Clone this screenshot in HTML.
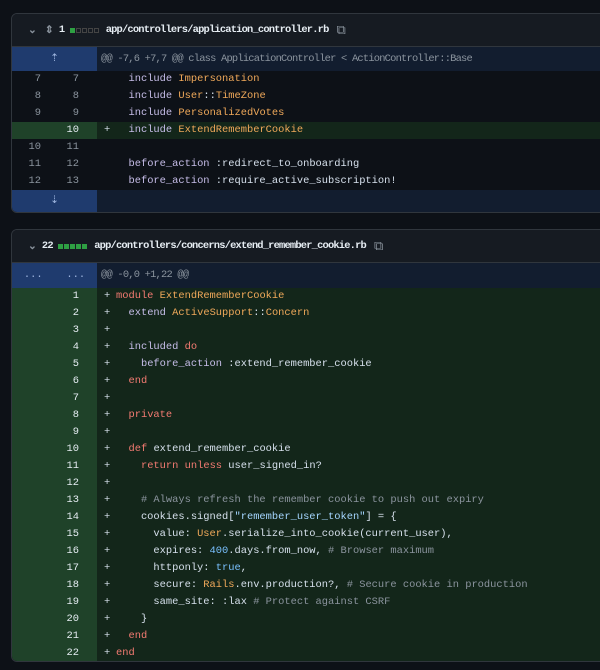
<!DOCTYPE html>
<html><head><meta charset="utf-8"><style>
*{margin:0;padding:0;box-sizing:border-box}
body{width:600px;height:670px;background:#0d1117;overflow:hidden;font-family:"Liberation Mono",monospace;font-size:10.4px;color:#d6e0ec;position:relative}
.box{position:absolute;left:11px;width:600px;border:1px solid #30363d;border-radius:6px;overflow:hidden;background:#0d1117}
.hdr{height:33px;background:#161b22;border-bottom:1px solid #30363d;display:flex;align-items:center;color:#e6edf3;font-size:10.4px;font-weight:bold;letter-spacing:-0.8px;white-space:pre}
.sq{display:inline-block;width:5px;height:5px;margin-right:1px;vertical-align:middle}
.row{display:flex;height:17px;line-height:17px}
.gut{width:85px;flex:none;display:flex}
.n{width:37px;text-align:right;padding-right:8px;color:#8b949e;flex:none}
.n2{width:38px;text-align:right;padding-right:8px;color:#8b949e;flex:none}
.hunk{background:#121d2f;height:24px;line-height:24px;color:#8b949e}
.hunk .g{width:85px;background:#1f3b6e;flex:none;color:#9fb6e0;text-align:center;letter-spacing:0}
.hunk .code{letter-spacing:-0.78px;padding-left:4px}
.add{background:#13261a}
.add .gut{background:#1f4229}
.add .n,.add .n2{color:#e6edf3}
.p{width:19px;padding-left:7px;flex:none}
.code{white-space:pre}
.k{color:#f47b72}.c{color:#f0a95a}.b{color:#79c0ff}.cm{color:#8b949e}.i{color:#c6bde8}.s{color:#a5d6ff}
</style></head><body>
<div class="box" style="top:13px;height:200px">
 <div class="hdr"><span style="margin-left:16px;color:#8b949e">⌄</span><span style="margin-left:9px;color:#8b949e">⇕</span><span style="margin-left:6px">1 </span><span class="sq" style="background:#2ea043"></span><span class="sq" style="border:1px solid #444"></span><span class="sq" style="border:1px solid #444"></span><span class="sq" style="border:1px solid #444"></span><span class="sq" style="border:1px solid #444"></span><span style="margin-left:6px">app/controllers/application_controller.rb</span><span style="margin-left:8px;color:#8b949e;font-weight:normal;font-size:13px">⧉</span></div>
 <div class="row hunk"><span class="g">⇡</span><span class="code">@@ -7,6 +7,7 @@ class ApplicationController &lt; ActionController::Base</span></div>
 <div class="row"><span class="gut"><span class="n">7</span><span class="n2">7</span></span><span class="p"> </span><span class="code">  <span class="i">include</span> <span class="c">Impersonation</span></span></div>
 <div class="row"><span class="gut"><span class="n">8</span><span class="n2">8</span></span><span class="p"> </span><span class="code">  <span class="i">include</span> <span class="c">User</span>::<span class="c">TimeZone</span></span></div>
 <div class="row"><span class="gut"><span class="n">9</span><span class="n2">9</span></span><span class="p"> </span><span class="code">  <span class="i">include</span> <span class="c">PersonalizedVotes</span></span></div>
 <div class="row add"><span class="gut"><span class="n"></span><span class="n2">10</span></span><span class="p">+</span><span class="code">  <span class="i">include</span> <span class="c">ExtendRememberCookie</span></span></div>
 <div class="row"><span class="gut"><span class="n">10</span><span class="n2">11</span></span><span class="p"> </span></div>
 <div class="row"><span class="gut"><span class="n">11</span><span class="n2">12</span></span><span class="p"> </span><span class="code">  <span class="i">before_action</span> :redirect_to_onboarding</span></div>
 <div class="row"><span class="gut"><span class="n">12</span><span class="n2">13</span></span><span class="p"> </span><span class="code">  <span class="i">before_action</span> :require_active_subscription!</span></div>
 <div class="row hunk" style="height:22px;line-height:22px"><span class="g">⇣</span><span></span></div>
</div>
<div class="box" style="top:229px;height:433px">
 <div class="hdr"><span style="margin-left:16px;color:#8b949e">⌄</span><span style="margin-left:6px">22 </span><span class="sq" style="background:#2ea043"></span><span class="sq" style="background:#2ea043"></span><span class="sq" style="background:#2ea043"></span><span class="sq" style="background:#2ea043"></span><span class="sq" style="background:#2ea043"></span><span style="margin-left:6px">app/controllers/concerns/extend_remember_cookie.rb</span><span style="margin-left:8px;color:#8b949e;font-weight:normal;font-size:13px">⧉</span></div>
 <div class="row hunk" style="height:25px;line-height:25px"><span class="g" style="display:flex;justify-content:space-around"><span>...</span><span>...</span></span><span class="code">@@ -0,0 +1,22 @@</span></div>
 <div class="add">
 <div class="row"><span class="gut"><span class="n"></span><span class="n2">1</span></span><span class="p">+</span><span class="code"><span class="k">module</span> <span class="c">ExtendRememberCookie</span></span></div>
 <div class="row"><span class="gut"><span class="n"></span><span class="n2">2</span></span><span class="p">+</span><span class="code">  <span class="i">extend</span> <span class="c">ActiveSupport</span>::<span class="c">Concern</span></span></div>
 <div class="row"><span class="gut"><span class="n"></span><span class="n2">3</span></span><span class="p">+</span></div>
 <div class="row"><span class="gut"><span class="n"></span><span class="n2">4</span></span><span class="p">+</span><span class="code">  <span class="i">included</span> <span class="k">do</span></span></div>
 <div class="row"><span class="gut"><span class="n"></span><span class="n2">5</span></span><span class="p">+</span><span class="code">    <span class="i">before_action</span> :extend_remember_cookie</span></div>
 <div class="row"><span class="gut"><span class="n"></span><span class="n2">6</span></span><span class="p">+</span><span class="code">  <span class="k">end</span></span></div>
 <div class="row"><span class="gut"><span class="n"></span><span class="n2">7</span></span><span class="p">+</span></div>
 <div class="row"><span class="gut"><span class="n"></span><span class="n2">8</span></span><span class="p">+</span><span class="code">  <span class="k">private</span></span></div>
 <div class="row"><span class="gut"><span class="n"></span><span class="n2">9</span></span><span class="p">+</span></div>
 <div class="row"><span class="gut"><span class="n"></span><span class="n2">10</span></span><span class="p">+</span><span class="code">  <span class="k">def</span> extend_remember_cookie</span></div>
 <div class="row"><span class="gut"><span class="n"></span><span class="n2">11</span></span><span class="p">+</span><span class="code">    <span class="k">return</span> <span class="k">unless</span> user_signed_in?</span></div>
 <div class="row"><span class="gut"><span class="n"></span><span class="n2">12</span></span><span class="p">+</span></div>
 <div class="row"><span class="gut"><span class="n"></span><span class="n2">13</span></span><span class="p">+</span><span class="code">    <span class="cm"># Always refresh the remember cookie to push out expiry</span></span></div>
 <div class="row"><span class="gut"><span class="n"></span><span class="n2">14</span></span><span class="p">+</span><span class="code">    cookies.signed[<span class="s">"remember_user_token"</span>] = {</span></div>
 <div class="row"><span class="gut"><span class="n"></span><span class="n2">15</span></span><span class="p">+</span><span class="code">      value: <span class="c">User</span>.serialize_into_cookie(current_user),</span></div>
 <div class="row"><span class="gut"><span class="n"></span><span class="n2">16</span></span><span class="p">+</span><span class="code">      expires: <span class="b">400</span>.days.from_now, <span class="cm"># Browser maximum</span></span></div>
 <div class="row"><span class="gut"><span class="n"></span><span class="n2">17</span></span><span class="p">+</span><span class="code">      httponly: <span class="b">true</span>,</span></div>
 <div class="row"><span class="gut"><span class="n"></span><span class="n2">18</span></span><span class="p">+</span><span class="code">      secure: <span class="c">Rails</span>.env.production?, <span class="cm"># Secure cookie in production</span></span></div>
 <div class="row"><span class="gut"><span class="n"></span><span class="n2">19</span></span><span class="p">+</span><span class="code">      same_site: :lax <span class="cm"># Protect against CSRF</span></span></div>
 <div class="row"><span class="gut"><span class="n"></span><span class="n2">20</span></span><span class="p">+</span><span class="code">    }</span></div>
 <div class="row"><span class="gut"><span class="n"></span><span class="n2">21</span></span><span class="p">+</span><span class="code">  <span class="k">end</span></span></div>
 <div class="row"><span class="gut"><span class="n"></span><span class="n2">22</span></span><span class="p">+</span><span class="code"><span class="k">end</span></span></div>
 </div>
</div>
</body></html>
